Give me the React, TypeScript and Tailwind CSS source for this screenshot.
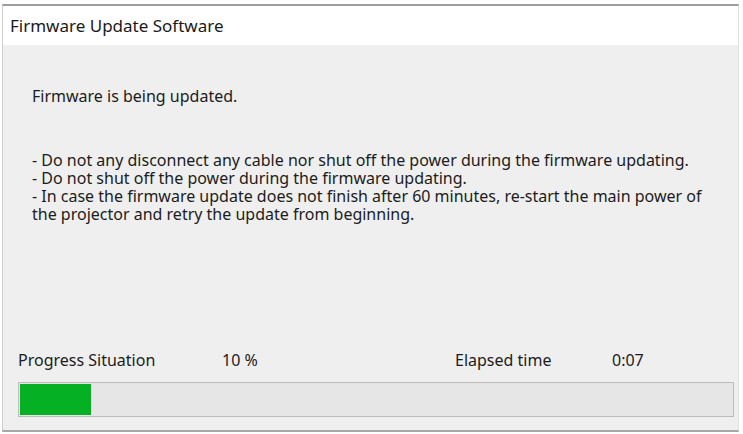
export default function App() {
  const progress = 10;
  return (
    <div
      className="w-[743px] h-[434px] bg-white overflow-hidden pt-[4px] pl-[2px]"
      style={{ fontFamily: '"Noto Sans", "Open Sans", sans-serif' }}
    >
      <div className="w-[737px] h-[428px] flex flex-col border-t-2 border-t-[#9c9c9c] border-l border-l-[#cfcfcf] border-r border-r-[#e0e0e0] border-b-2 border-b-[#a8a8a8]">
        {/* title bar */}
        <div className="h-[39px] bg-white flex items-center pl-[7px] text-[17px] text-[#1a1a1a] shrink-0">
          Firmware Update Software
        </div>

        {/* body */}
        <div className="flex-1 bg-[#efefef] flex flex-col text-[16px] text-[#1c1c1c]">
          <div className="pl-[29px] pt-[42px] leading-[18px]">Firmware is being updated.</div>

          <div className="pl-[29px] pt-[46px] leading-[18px]">
            <div>- Do not any disconnect any cable nor shut off the power during the firmware updating.</div>
            <div>- Do not shut off the power during the firmware updating.</div>
            <div>- In case the firmware update does not finish after 60 minutes, re-start the main power of</div>
            <div>the projector and retry the update from beginning.</div>
          </div>

          <div className="mt-auto pl-[15px] pr-[4px] pb-[13px]">
            <div className="flex items-center h-[18px] leading-[18px]">
              <span className="w-[204px]">Progress Situation</span>
              <span className="w-[233px]">{progress} %</span>
              <span className="w-[157px]">Elapsed time</span>
              <span>0:07</span>
            </div>
            <div className="mt-[13px] h-[35px] border border-[#bcbcbc] bg-[#e6e6e6] p-[1px]">
              <div className="h-full bg-[#06b025]" style={{ width: `${progress}%` }} />
            </div>
          </div>
        </div>
      </div>
    </div>
  );
}
